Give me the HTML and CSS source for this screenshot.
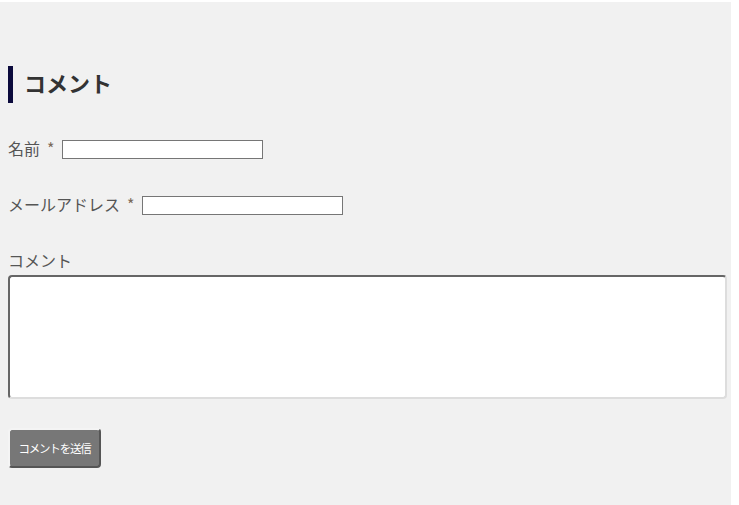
FILE: index.html
```html
<!DOCTYPE html>
<html lang="ja">
<head>
<meta charset="utf-8">
<link rel="stylesheet" href="styles.css">
</head>
<body>
<div class="page">
  <h3 class="title">コメント</h3>
  <form class="form">
    <p class="row"><label class="lbl">名前 <span class="req">*</span></label><input class="field" type="text"></p>
    <p class="row"><label class="lbl">メールアドレス <span class="req">*</span></label><input class="field" type="text"></p>
    <p class="row comment"><label class="block">コメント</label><textarea class="area"></textarea></p>
    <p class="submit"><button class="btn" type="button">コメントを送信</button></p>
  </form>
</div>
</body>
</html>
```
FILE: styles.css
```css
html, body {
  margin: 0;
  padding: 0;
  background: #fff;
}
.page {
  box-sizing: border-box;
  margin-top: 2px;
  width: 731px;
  height: 503px;
  padding: 64px 0 0 8px;
  background: #f1f1f1;
  font-family: "Noto Sans CJK JP", "Noto Sans", sans-serif;
  color: #555;
}
.title {
  margin: 0;
  height: 37px;
  box-sizing: border-box;
  line-height: 32px;
  padding-bottom: 5px;
  border-left: 5px solid #0b0a3c;
  padding-left: 11px;
  font-size: 22px;
  font-weight: bold;
  color: #333;
}
.form {
  margin: 34px 0 0;
}
.row {
  margin: 0 0 32px;
  font-size: 16px;
  line-height: 24px;
  height: 24px;
  display: flex;
  align-items: center;
  gap: 7px;
}
.lbl {
  line-height: 22px;
  margin-bottom: 2px;
}
.req {
  color: #7a6a5a;
  margin-left: 3.5px;
}
.field {
  box-sizing: border-box;
  width: 201px;
  height: 19px;
  margin: 0;
  border: 1px solid #767676;
  background: #fff;
  padding: 0 2px;
}
.row.comment {
  display: block;
  height: auto;
  margin: 0;
}
.block {
  display: block;
  line-height: 22px;
  margin-bottom: 4px;
}
.area {
  display: block;
  box-sizing: border-box;
  width: 719px;
  height: 124px;
  margin: 0;
  border: 2px solid;
  border-color: #666 #ddd #ddd #666;
  border-radius: 4px;
  background: #fff;
  resize: none;
}
.submit {
  margin: 29px 0 0;
}
.btn {
  box-sizing: border-box;
  width: 93px;
  height: 40px;
  margin: 0;
  padding: 0;
  border: 2px solid;
  border-color: #f4f4f4 #555 #555 #f4f4f4;
  border-radius: 4px;
  background: #777;
  color: #fff;
  font-family: "Noto Sans CJK JP", sans-serif;
  font-size: 11.5px;
  letter-spacing: -1.2px;
}
```
